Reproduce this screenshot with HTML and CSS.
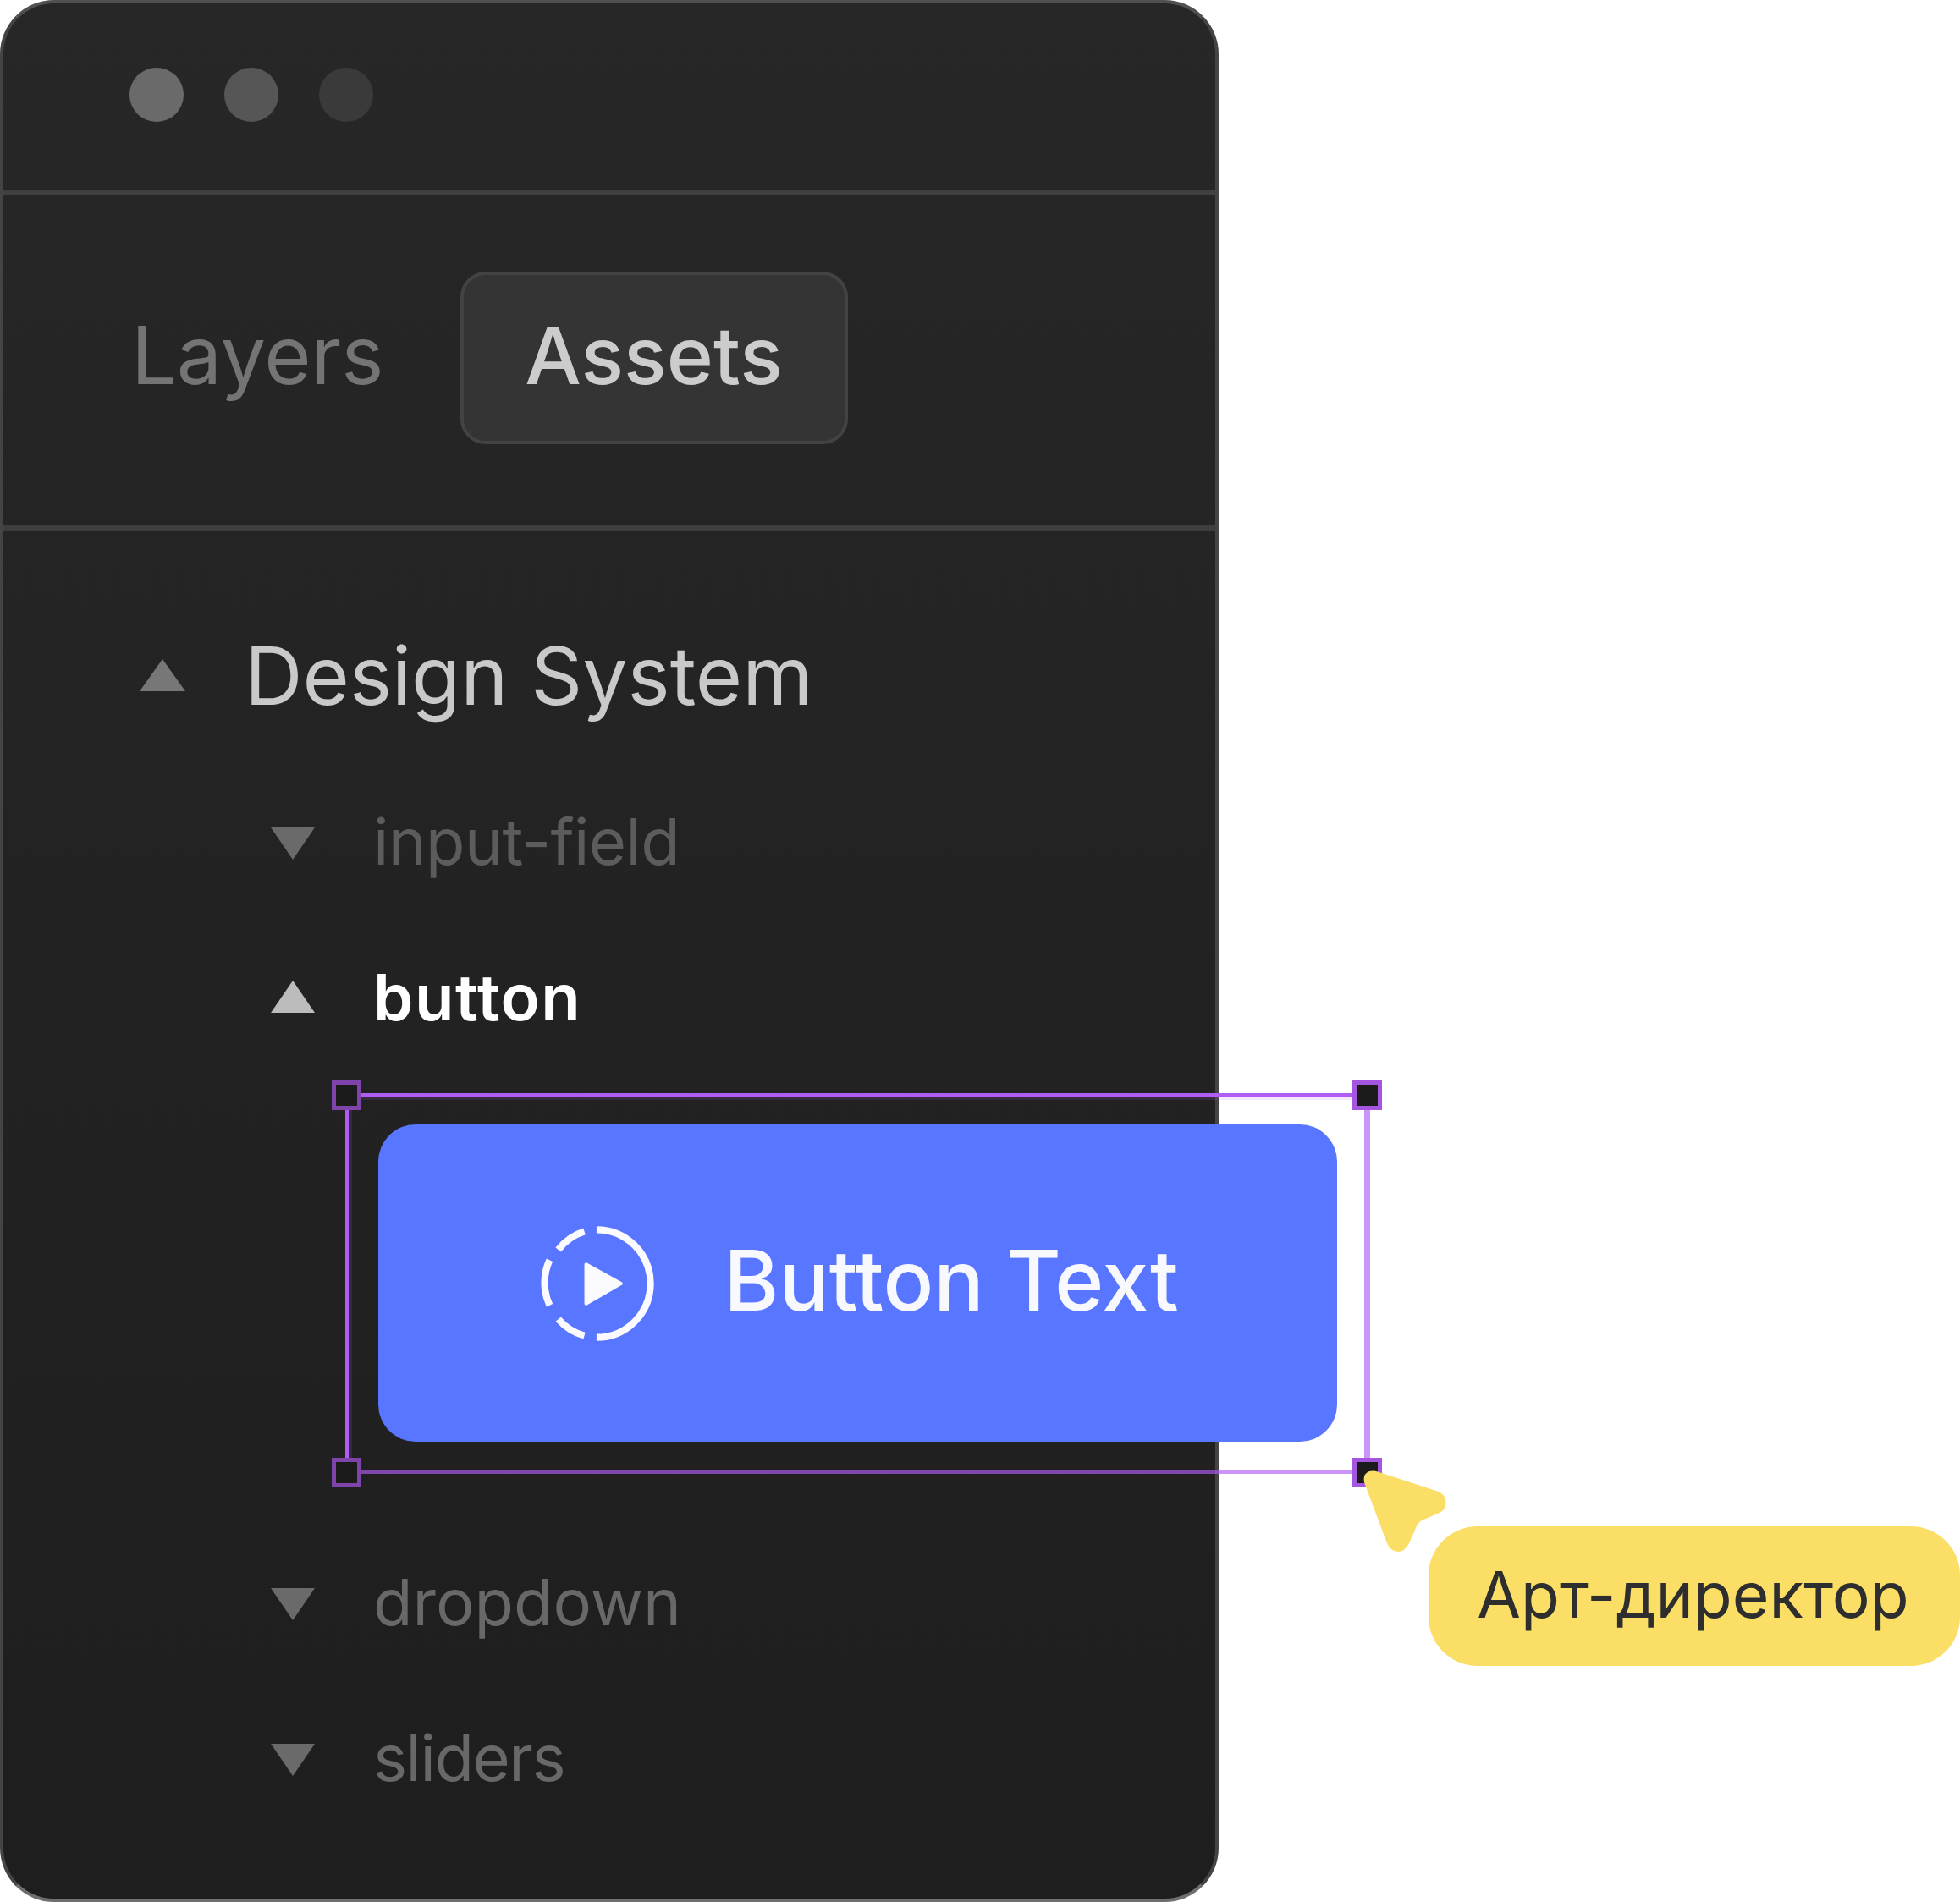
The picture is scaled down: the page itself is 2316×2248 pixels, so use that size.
FILE: index.html
```html
<!DOCTYPE html>
<html lang="en">

<head>
    <meta charset="UTF-8">
    <title>Design system panel</title>
    <link rel="stylesheet" href="styles.css">
</head>

<body>

    <div class="scene">
        <div class="panel">

            <div class="panel__titlebar">
                <div class="panel__dot"></div>
                <div class="panel__dot panel__dot--second"></div>
                <div class="panel__dot panel__dot--third"></div>
            </div>

            <div class="panel__tabs">
                <div class="panel__tab">Layers</div>
                <div class="panel__tab panel__tab--active">Assets</div>
            </div>

            <div class="tree">
                <div class="tree__row tree__row--root">
                    <div class="tree__caret tree__caret--up"></div>
                    <p>Design System</p>
                </div>
                <div class="tree__row tree__row--dim">
                    <div class="tree__caret"></div>
                    <p>input-field</p>
                </div>
                <div class="tree__row tree__row--open">
                    <div class="tree__caret tree__caret--up"></div>
                    <p>button</p>
                </div>

                <div class="selection">
                    <div class="selection__handle selection__handle--tl"></div>
                    <div class="selection__handle selection__handle--tr"></div>
                    <div class="selection__handle selection__handle--bl"></div>
                    <div class="selection__handle selection__handle--br"></div>
                    <div class="button">
                        <svg class="button__icon" viewBox="0 0 144 144">
                            <g fill="none" stroke="#fafaff" stroke-width="8">
                                <path d="M69 10A62 62 0 0 1 69 134"></path>
                                <path d="M55 12A62 62 0 0 0 25 33"></path>
                                <path d="M15 45A62 62 0 0 0 15 97"></path>
                                <path d="M25 113A62 62 0 0 0 55 132"></path>
                            </g>
                            <path d="M57 50V95L97 72Z" fill="#fafaff" stroke="#fafaff" stroke-width="4" stroke-linejoin="round"></path>
                        </svg>
                        <span class="button__text">Button Text</span>
                    </div>
                </div>

                <div class="tree__row">
                    <div class="tree__caret"></div>
                    <p>dropdown</p>
                </div>
                <div class="tree__row tree__row--tight">
                    <div class="tree__caret"></div>
                    <p>sliders</p>
                </div>
            </div>
        </div>

        <svg class="cursor" viewBox="0 0 100 100">
            <path d="M18 1.5L90 25Q98.500 29 98.500 38Q98.500 46 91 50L70 59Q65 62 63 68L55 86Q50 96 42 96Q33 96 28.500 85L2 14Q0 4 8 1Q13 0 18 1.500Z" fill="#fbde65"></path>
        </svg>
        <div class="bubble">Арт-директор</div>
    </div>

</body>

</html>
```

FILE: styles.css
```css
* {
    padding: 0;
    margin: 0;
    box-sizing: border-box;
}

body {
    background-color: white;
    font-family: "Inter", "Liberation Sans", sans-serif;
}

.scene {
    position: relative;
    width: 2316px;
    height: 2248px;
}

.panel {
    width: 1440px;
    height: 2248px;
    border: 4px solid #444444;
    border-top-color: #505050;
    border-bottom-color: #6e6e6e;
    border-radius: 64px;
    background: linear-gradient(#272727, #1e1e1e);
}

.panel__titlebar {
    height: 226px;
    padding-left: 149px;
    padding-bottom: 4px;
    display: flex;
    align-items: center;
    gap: 48px;
    border-bottom: 6px solid #404040;
}

.panel__dot {
    width: 64px;
    height: 64px;
    border-radius: 50%;
    background-color: #6a6a6a;
}

.panel__dot--second {
    background-color: #565656;
}

.panel__dot--third {
    background-color: #3a3a3a;
}

.panel__tabs {
    height: 398px;
    padding-left: 151px;
    padding-bottom: 6px;
    display: flex;
    align-items: center;
    gap: 90px;
    border-bottom: 7px solid #3e3e3e;
}

.panel__tab {
    padding-bottom: 6px;
    font-size: 95px;
    color: #747474;
    filter: blur(0.6px);
}

.panel__tab--active {
    width: 458px;
    height: 204px;
    display: flex;
    justify-content: center;
    align-items: center;
    border: 4px solid #434343;
    border-radius: 30px;
    background-color: #343434;
    color: #cccccc;
    font-size: 94px;
    font-weight: 500;
    filter: none;
}

.tree {
    padding-top: 78px;
    display: flex;
    flex-direction: column;
}

.tree__row {
    height: 184px;
    padding-left: 316px;
    display: flex;
    align-items: center;
    gap: 69px;
    font-size: 76px;
    color: #686868;
}

.tree__row p {
    filter: blur(0.6px);
}

.tree__row--root {
    margin-bottom: 12px;
    padding-left: 161px;
    gap: 70px;
    font-size: 95px;
    color: #c9c9c9;
}

.tree__row--dim {
    letter-spacing: -0.6px;
    color: #5c5c5c;
}

.tree__row--open {
    font-weight: 600;
    letter-spacing: 1.5px;
    color: white;
}

.tree__row--tight {
    letter-spacing: -1.5px;
}

.tree__caret {
    width: 52px;
    height: 38px;
    margin-top: 6px;
    background-color: #6a6a6a;
    clip-path: polygon(0 0, 100% 0, 50% 100%);
}

.tree__caret--up {
    margin-top: 0;
    clip-path: polygon(50% 0, 100% 100%, 0 100%);
}

.tree__row--root .tree__caret {
    width: 54px;
    background-color: #777777;
}

.tree__row--open .tree__caret {
    background-color: #bcbcbc;
}

.selection {
    position: relative;
    width: 1211px;
    margin: 22px 0 59px 404px;
    padding: 33px 32px 34px 35px;
    border: 4px solid rgba(178, 92, 246, 0.65);
    border-top-color: #b25cf6;
    border-left-color: #b25cf6;
    border-right-width: 7px;
    box-shadow: inset 4px 4px 0 rgba(178, 92, 246, 0.14);
}

.selection__handle {
    position: absolute;
    width: 35px;
    height: 35px;
    border: 5px solid #a556e0;
    background-color: #1b1b1b;
}

.selection__handle--tl {
    left: -20px;
    top: -19px;
    border-color: #7e44ab;
}

.selection__handle--tr {
    right: -21px;
    top: -19px;
}

.selection__handle--bl {
    left: -20px;
    bottom: -20px;
    border-color: #7e44ab;
}

.selection__handle--br {
    right: -21px;
    bottom: -20px;
}

.button {
    height: 375px;
    display: flex;
    justify-content: center;
    align-items: center;
    gap: 73px;
    border-radius: 44px;
    background-color: #5876ff;
    color: #f8f8ff;
    font-size: 99px;
    font-weight: 500;
}

.button__icon {
    width: 148px;
    height: 148px;
}

.button__text {
    margin-bottom: 8px;
    filter: blur(0.6px);
}

.cursor {
    position: absolute;
    left: 1610px;
    top: 1738px;
    width: 100px;
    height: 100px;
}

.bubble {
    position: absolute;
    left: 1688px;
    top: 1804px;
    width: 628px;
    height: 165px;
    padding: 0 3px 5px 0;
    display: flex;
    justify-content: center;
    align-items: center;
    border-radius: 58px;
    background-color: #fbde65;
    color: #2e2e2e;
    font-size: 75px;
}
```
